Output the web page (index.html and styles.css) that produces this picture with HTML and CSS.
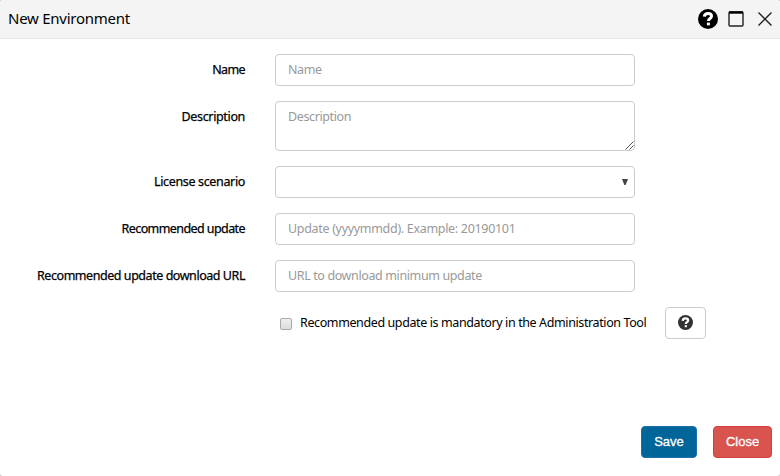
FILE: index.html
```html
<!DOCTYPE html>
<html lang="en">
<head>
<meta charset="utf-8">
<title>New Environment</title>
<link rel="stylesheet" href="styles.css">
</head>
<body>
<div class="dialog">
  <header class="dialog-header">
    <h1 class="title">New Environment</h1>
    <div class="window-actions">
      <svg class="help" viewBox="0 0 20 20" width="20" height="20"><circle cx="10" cy="10" r="10"/><path class="hook" d="M6.3 7.7C6.5 5.5 8 4.5 10.1 4.5C12.3 4.5 13.5 5.6 13.5 7.2C13.5 9.5 10.4 9.4 10.4 12"/><path class="dot" d="M8.9 13.6h3v2.7h-3z"/></svg>
      <svg class="maximize" viewBox="0 0 16 16" width="16" height="16"><rect x="1" y="1" width="14" height="14" rx="1"/><path d="M1 1.5h14"/></svg>
      <svg class="dismiss" viewBox="0 0 16 16" width="16" height="16"><path d="M1.5 1.5l13 13M14.5 1.5l-13 13"/></svg>
    </div>
  </header>
  <form class="form">
    <div class="row"><label class="label label-name" for="name">Name</label><input class="control" id="name" placeholder="Name"></div>
    <div class="row"><label class="label" for="desc">Description</label>
      <div class="area-wrap"><textarea class="control area" id="desc" placeholder="Description"></textarea><svg class="grip" viewBox="0 0 9 9" width="9" height="9"><path d="M.5 8.5l8-8M4.5 8.5l4-4"/></svg></div></div>
    <div class="row"><label class="label" for="scenario">License scenario</label><div class="control select" id="scenario"><svg viewBox="0 0 6 6" width="6" height="6"><path d="M0 0h6L3.6 6H2.4z"/></svg></div></div>
    <div class="row"><label class="label label-update" for="update">Recommended update</label><input class="control update" id="update" placeholder="Update (yyyymmdd). Example: 20190101"></div>
    <div class="row"><label class="label label-url" for="url">Recommended update download URL</label><input class="control" id="url" placeholder="URL to download minimum update"></div>
    <div class="check-row">
      <span class="checkbox"></span>
      <span class="check-text">Recommended update is mandatory in the Administration Tool</span>
      <button class="help-button" type="button"><svg class="help" viewBox="0 0 20 20" width="15" height="15"><circle cx="10" cy="10" r="10"/><path class="hook" d="M6.3 7.7C6.5 5.5 8 4.5 10.1 4.5C12.3 4.5 13.5 5.6 13.5 7.2C13.5 9.5 10.4 9.4 10.4 12"/><path class="dot" d="M8.9 13.6h3v2.7h-3z"/></svg></button>
    </div>
  </form>
  <footer class="footer">
    <button class="btn save">Save</button>
    <button class="btn close">Close</button>
  </footer>
</div>
</body>
</html>
```
FILE: styles.css
```css
* { box-sizing: border-box; }
body { margin: 0; background: #ccc; color: #000; font: 12.5px/18px "Noto Sans", sans-serif; }
.dialog { height: 476px; display: flex; flex-direction: column; background: #fff; border-radius: 3px; overflow: hidden; }
.dialog-header { height: 39px; flex: none; display: flex; align-items: center; justify-content: space-between; padding: 0 7px 0 8px; background: #f4f4f4; border-bottom: 1px solid #e5e5e5; }
.title { margin: 0; padding-bottom: 2px; font-size: 15px; font-weight: 400; line-height: 20px; letter-spacing: -.25px; }
.window-actions { display: flex; align-items: center; gap: 10px; }
.help { display: block; fill: #000; }
.help .hook { fill: none; stroke: #fff; stroke-width: 3; }
.help .dot { fill: #fff; }
.maximize, .dismiss { fill: none; stroke: #222; stroke-width: 1.4; }
.maximize path { stroke: #000; stroke-width: 2.4; }
.dismiss { margin-left: 3px; margin-right: 0; }
.form { padding-top: 15px; display: flex; flex-direction: column; gap: 15px; }
.row { display: grid; grid-template-columns: 245px 360px; column-gap: 30px; }
.label { padding-top: 7px; text-align: right; letter-spacing: -.35px; -webkit-text-stroke: .25px #000; }
.label-name { letter-spacing: -.6px; }
.label-update { letter-spacing: -.58px; }
.label-url { letter-spacing: -.45px; }
.control { display: block; width: 360px; height: 32px; margin: 0; padding: 0 12px 2px; border: 1px solid #ccc; border-radius: 4px; background: #fff; font: 12.5px/18px "Noto Sans", sans-serif; letter-spacing: -.38px; }
.control::placeholder { color: #999; opacity: 1; }
.control.update { letter-spacing: -.31px; }
.area-wrap { position: relative; }
.area { height: 50px; padding: 6px 12px; resize: none; overflow: hidden; }
.grip { position: absolute; right: 1px; bottom: 1px; fill: none; stroke: #555; stroke-width: 1; }
.select { display: flex; align-items: center; justify-content: flex-end; padding: 0 6px 0 12px; }
.select path { fill: #444; }
.check-row { display: flex; padding-left: 280px; height: 32px; }
.checkbox { width: 12px; height: 12px; margin: 11px 8px 0 0; border: 1px solid #aaa; border-radius: 2px; background: linear-gradient(#eee, #ddd); }
.check-text { width: 365px; padding-top: 7px; white-space: nowrap; letter-spacing: -.39px; }
.help-button { display: flex; align-items: center; justify-content: center; width: 41px; height: 32px; padding: 0 0 2px; background: #fff; border: 1px solid #ccc; border-radius: 4px; }
.help-button .help { fill: #333; }
.footer { margin-top: auto; padding: 0 8px 18px; display: flex; justify-content: flex-end; gap: 16px; }
.btn { height: 32px; padding: 0 0 2px; border-radius: 4px; color: #fff; font: 13px "Liberation Sans", sans-serif; -webkit-text-stroke: .3px #fff; }
.save { width: 56px; background: #069; border: 1px solid #1b6fad; }
.close { width: 59px; background: #d9534f; border: 1px solid #d43f3a; }
```
